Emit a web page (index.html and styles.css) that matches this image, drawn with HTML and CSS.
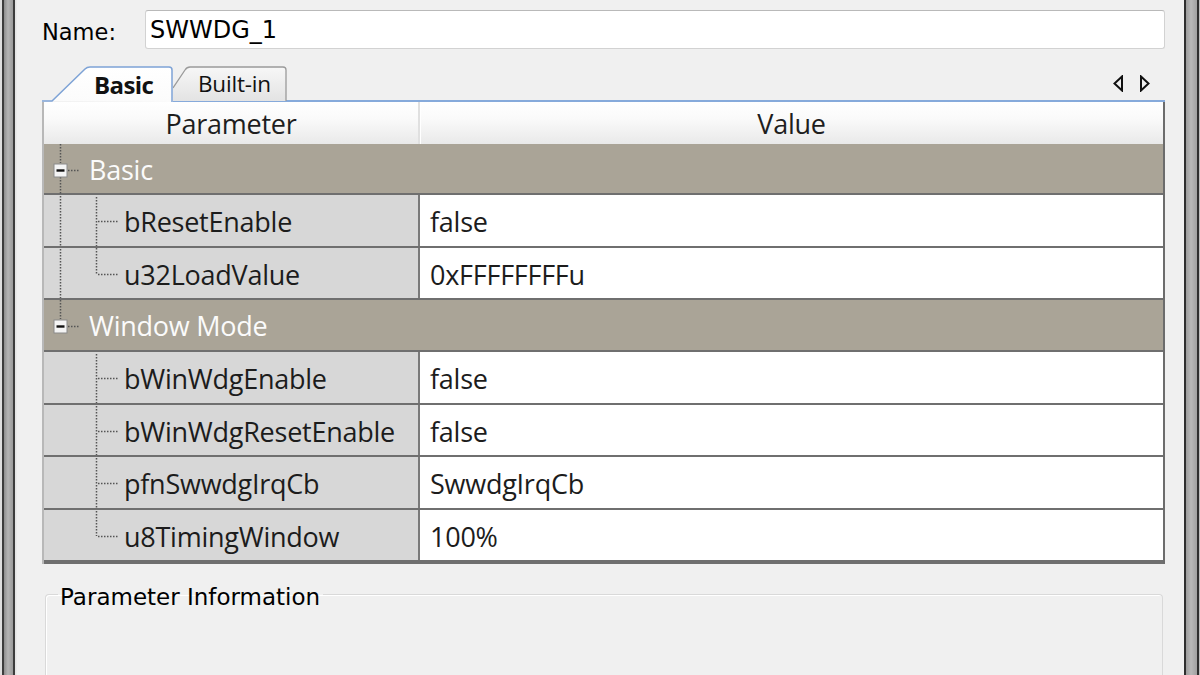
FILE: index.html
```html
<!DOCTYPE html>
<html>
<head>
<meta charset="utf-8">
<link rel="stylesheet" href="styles.css">
</head>
<body>
<div class="frame">
  <div class="edge edge-left"></div>
  <div class="main">
    <div class="name-row">
      <span class="name-label">Name:</span>
      <div class="name-input">SWWDG_1</div>
    </div>

    <div class="tabs">
      <div class="tab tab-active">
        <svg class="tab-shape" width="131" height="36" viewBox="0 0 131 36">
          <defs><linearGradient id="gact" x1="0" y1="0" x2="0" y2="1"><stop offset="0" stop-color="#ffffff"/><stop offset="1" stop-color="#fbfbfb"/></linearGradient></defs>
          <path d="M0,35 L10,35 L43,3 Q45,1 48,1 L127,1 Q130,1 130,4 L130,36" fill="url(#gact)" stroke="#7ea3d6" stroke-width="1.5"/>
        </svg>
        <span class="tab-text tab-text-active">Basic</span>
      </div>
      <div class="tab tab-inactive">
        <svg class="tab-shape" width="114" height="36" viewBox="0 0 114 36">
          <defs><linearGradient id="gin" x1="0" y1="0" x2="0" y2="1"><stop offset="0" stop-color="#f7f7f7"/><stop offset="1" stop-color="#e3e3e3"/></linearGradient></defs>
          <path d="M0,22 L12,4 Q14,1 17,1 L110,1 Q113,1 113,4 L113,35 L0,35 Z" fill="url(#gin)" stroke="none"/>
          <path d="M0,22 L12,4 Q14,1 17,1 L110,1 Q113,1 113,4 L113,35" fill="none" stroke="#9a9a9a" stroke-width="1.3"/>
        </svg>
        <span class="tab-text">Built-in</span>
      </div>
      <div class="tab-fill">
        <svg class="arrows" width="40" height="17" viewBox="0 0 40 17">
          <path d="M9,1.5 L1.5,8.5 L9,15.5 Z" fill="none" stroke="#111" stroke-width="2" stroke-linejoin="miter"/>
          <path d="M28,1.5 L35.5,8.5 L28,15.5 Z" fill="none" stroke="#111" stroke-width="2" stroke-linejoin="miter"/>
        </svg>
      </div>
    </div>

    <div class="grid">
      <div class="row head">
        <div class="hcell hcell-param">Parameter</div>
        <div class="hcell">Value</div>
      </div>

      <div class="row cat">
        <svg class="tree-cat" width="45" height="50" viewBox="0 0 45 50">
          <line x1="16.5" y1="0" x2="16.5" y2="19" class="dot"/>
          <line x1="16.5" y1="33" x2="16.5" y2="50" class="dot"/>
          <line x1="24" y1="26.5" x2="36" y2="26.5" class="dot"/>
          <rect x="10" y="20" width="13" height="13" fill="#f4f4f4" stroke="#8a8a8a" stroke-width="1"/>
          <line x1="12.5" y1="26.5" x2="20.5" y2="26.5" stroke="#111" stroke-width="2.4"/>
        </svg>
        <span class="cat-text">Basic</span>
      </div>

      <div class="row item">
        <div class="pcell">
          <svg class="tree" width="80" height="51" viewBox="0 0 80 51">
            <line x1="16.5" y1="-2" x2="16.5" y2="53" class="dot"/>
            <line x1="52.5" y1="2" x2="52.5" y2="51" class="dot"/>
            <line x1="54" y1="26.5" x2="74" y2="26.5" class="dot"/>
          </svg>
          <span>bResetEnable</span>
        </div>
        <div class="vcell">false</div>
      </div>

      <div class="row item">
        <div class="pcell">
          <svg class="tree" width="80" height="50" viewBox="0 0 80 50">
            <line x1="16.5" y1="-2" x2="16.5" y2="52" class="dot"/>
            <line x1="52.5" y1="0" x2="52.5" y2="26" class="dot"/>
            <line x1="54" y1="26.5" x2="74" y2="26.5" class="dot"/>
          </svg>
          <span>u32LoadValue</span>
        </div>
        <div class="vcell">0xFFFFFFFFu</div>
      </div>

      <div class="row cat">
        <svg class="tree-cat" width="45" height="50" viewBox="0 0 45 50">
          <line x1="16.5" y1="0" x2="16.5" y2="19" class="dot"/>
          <line x1="24" y1="26.5" x2="36" y2="26.5" class="dot"/>
          <rect x="10" y="20" width="13" height="13" fill="#f4f4f4" stroke="#8a8a8a" stroke-width="1"/>
          <line x1="12.5" y1="26.5" x2="20.5" y2="26.5" stroke="#111" stroke-width="2.4"/>
        </svg>
        <span class="cat-text">Window Mode</span>
      </div>

      <div class="row item">
        <div class="pcell">
          <svg class="tree" width="80" height="51" viewBox="0 0 80 51">
            <line x1="52.5" y1="2" x2="52.5" y2="53" class="dot"/>
            <line x1="54" y1="26.5" x2="74" y2="26.5" class="dot"/>
          </svg>
          <span>bWinWdgEnable</span>
        </div>
        <div class="vcell">false</div>
      </div>

      <div class="row item">
        <div class="pcell">
          <svg class="tree" width="80" height="50" viewBox="0 0 80 50">
            <line x1="52.5" y1="-2" x2="52.5" y2="52" class="dot"/>
            <line x1="54" y1="26.5" x2="74" y2="26.5" class="dot"/>
          </svg>
          <span>bWinWdgResetEnable</span>
        </div>
        <div class="vcell">false</div>
      </div>

      <div class="row item">
        <div class="pcell">
          <svg class="tree" width="80" height="51" viewBox="0 0 80 51">
            <line x1="52.5" y1="-2" x2="52.5" y2="53" class="dot"/>
            <line x1="54" y1="26.5" x2="74" y2="26.5" class="dot"/>
          </svg>
          <span>pfnSwwdgIrqCb</span>
        </div>
        <div class="vcell">SwwdgIrqCb</div>
      </div>

      <div class="row item">
        <div class="pcell">
          <svg class="tree" width="80" height="50" viewBox="0 0 80 50">
            <line x1="52.5" y1="-2" x2="52.5" y2="26" class="dot"/>
            <line x1="54" y1="26.5" x2="74" y2="26.5" class="dot"/>
          </svg>
          <span>u8TimingWindow</span>
        </div>
        <div class="vcell">100%</div>
      </div>
    </div>

    <fieldset class="info">
      <legend>Parameter Information</legend>
    </fieldset>
  </div>
  <div class="edge edge-right"></div>
</div>
</body>
</html>
```

FILE: styles.css
```css
* { box-sizing: border-box; }
html, body {
  margin: 0;
  padding: 0;
  width: 1200px;
  height: 675px;
  overflow: hidden;
  background: #f0f0f0;
}
.frame {
  display: flex;
  width: 1200px;
  height: 675px;
}
.edge-left {
  width: 17px;
  flex: none;
  background: linear-gradient(to right,
    #dedede 0, #dedede 2px,
    #3c3c3c 2px, #3c3c3c 4px,
    #8e8e8e 4px, #b4b4b4 8px, #9a9a9a 13px,
    #3c3c3c 13px, #3c3c3c 15px,
    #e2e2e2 15px, #ececec 17px);
}
.edge-right {
  width: 17px;
  flex: none;
  background: linear-gradient(to right,
    #f2f2f2 0, #f2f2f2 1px,
    #2e2e2e 1px, #2e2e2e 3px,
    #9c9c9c 3px, #b8b8b8 8px, #a0a0a0 14px,
    #2e2e2e 14px, #2e2e2e 16px,
    #bcbcbc 16px);
}
.main {
  flex: 1;
  padding: 10px 18px 0 25px;
  display: flex;
  flex-direction: column;
  min-width: 0;
  height: 675px;
  overflow: hidden;
}

/* Name row */
.name-row {
  display: flex;
  align-items: center;
  height: 39px;
  flex: none;
}
.name-label {
  width: 103px;
  font-family: "DejaVu Sans", sans-serif;
  font-size: 22.5px;
  color: #000;
  padding-top: 5px;
}
.name-input {
  flex: 1;
  height: 39px;
  background: #fff;
  border: 1px solid #d2d2d2;
  border-top-color: #b9b9b9;
  border-radius: 3px;
  font-family: "DejaVu Sans", sans-serif;
  font-size: 24px;
  color: #000;
  padding: 5px 0 0 4px;
}

/* Tabs */
.tabs {
  margin-top: 17px;
  height: 36px;
  display: flex;
  align-items: stretch;
  flex: none;
}
.tab {
  position: relative;
  display: flex;
  align-items: center;
  flex: none;
}
.tab-shape {
  position: absolute;
  left: 0;
  top: 0;
}
.tab-active {
  width: 131px;
  padding-left: 52px;
}
.tab-inactive {
  width: 114px;
  padding-left: 25px;
  border-bottom: 2px solid #86aadb;
}
.tab-text {
  position: relative;
  font-family: "Open Sans", sans-serif;
  font-size: 22.5px;
  color: #111;
  letter-spacing: -0.2px;
  padding-top: 1px;
}
.tab-text-active {
  font-weight: 700;
  font-size: 24px;
  letter-spacing: -0.6px;
  padding-top: 1px;
}
.tab-fill {
  flex: 1;
  border-bottom: 2px solid #86aadb;
  display: flex;
  justify-content: flex-end;
  align-items: flex-start;
  padding: 9px 12px 0 0;
}

/* Grid */
.grid {
  width: 1123px;
  flex: none;
  display: grid;
  grid-template-rows: 42px 51px 53px 52px 52px 53px 52px 53px 54px;
  font-family: "Open Sans", sans-serif;
  font-size: 27px;
  letter-spacing: -0.25px;
  border-left: 2px solid #b8b8b8;
  border-right: 2px solid #6c6c6c;
}
.row {
  display: grid;
  grid-template-columns: 376px 1fr;
  min-height: 0;
}
.head {
  background: linear-gradient(#ffffff, #fafafa 40%, #e9e9e9);
}
.hcell {
  display: flex;
  align-items: center;
  justify-content: center;
  color: #1e1e1e;
  padding-top: 0;
}
.hcell-param {
  border-right: 2px solid #e0e0e0;
  box-shadow: 1px 0 0 #ffffff;
}
.cat {
  display: flex;
  align-items: center;
  background: #aaa497;
  border-bottom: 2px solid #6f6f6f;
}
.tree-cat {
  flex: none;
  display: block;
}
.cat-text {
  color: #fbfbfb;
  padding-top: 1px;
}
.dot {
  stroke: #555;
  stroke-width: 1.5;
  stroke-dasharray: 1.5 1.5;
}
.item {
  border-bottom: 2px solid #6f6f6f;
}
.item:last-child {
  border-bottom-width: 4px;
}
.pcell {
  display: flex;
  align-items: center;
  background: #d7d7d7;
  border-right: 2px solid #7a7a7a;
  color: #1c1c1c;
}
.tree {
  flex: none;
  display: block;
}
.pcell span, .vcell {
  padding-top: 2px;
}
.vcell {
  display: flex;
  align-items: center;
  background: #ffffff;
  padding-left: 10px;
  color: #1c1c1c;
}

/* Parameter information */
.info {
  margin: 14px 0 0 3px;
  width: 1118px;
  flex: 1;
  min-height: 0;
  border: 1px solid #d9d9d9;
  border-bottom: 0;
  border-radius: 4px 4px 0 0;
  box-shadow: inset 1px 1px 0 #ffffff;
  padding: 0;
}
.info legend {
  margin-left: 12px;
  padding: 6px 3px 0 2px;
  font-family: "DejaVu Sans", sans-serif;
  font-size: 23px;
  color: #000;
}
```
